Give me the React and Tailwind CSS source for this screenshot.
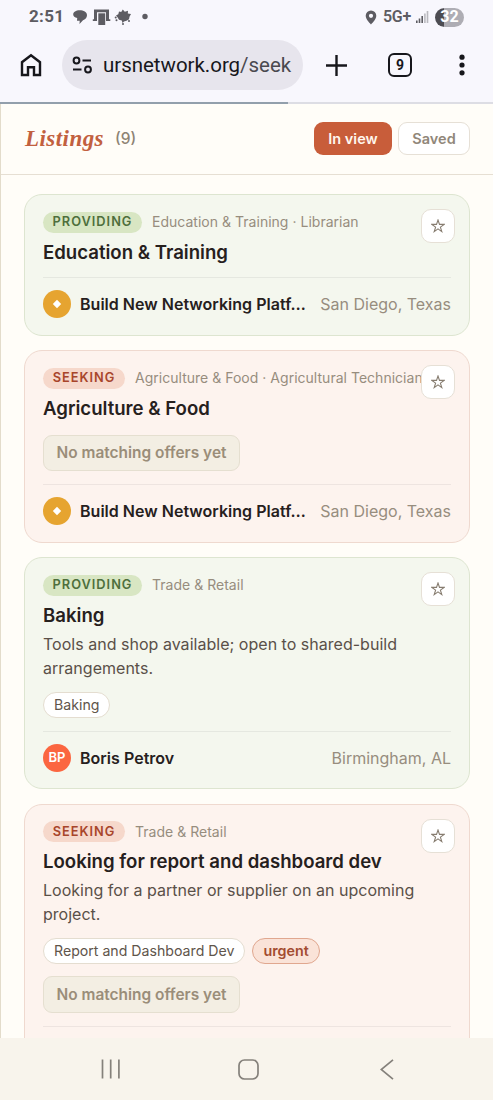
import React from 'react';

const LISTINGS = [
  {
    id: 1,
    type: 'providing',
    category: 'Education & Training · Librarian',
    title: 'Education & Training',
    owner: 'Build New Networking Platf…',
    location: 'San Diego, Texas',
  },
  {
    id: 2,
    type: 'seeking',
    category: 'Agriculture & Food · Agricultural Technician',
    title: 'Agriculture & Food',
    noOffers: true,
    owner: 'Build New Networking Platf…',
    location: 'San Diego, Texas',
  },
  {
    id: 3,
    type: 'providing',
    category: 'Trade & Retail',
    title: 'Baking',
    description: 'Tools and shop available; open to shared-build arrangements.',
    tags: ['Baking'],
    owner: 'Boris Petrov',
    initials: 'BP',
    location: 'Birmingham, AL',
  },
  {
    id: 4,
    type: 'seeking',
    category: 'Trade & Retail',
    title: 'Looking for report and dashboard dev',
    description: 'Looking for a partner or supplier on an upcoming project.',
    tags: ['Report and Dashboard Dev'],
    urgent: true,
    noOffers: true,
    owner: '',
    location: '',
  },
];

const StatusBar = () => (
  <div className="flex h-[34px] items-center justify-between pl-[29px] pr-[29px] text-[#5d5c62]">
    <div className="flex items-center">
      <span className="w-[36px] whitespace-nowrap font-['Roboto',sans-serif] text-[17px] font-bold tracking-[0.3px]">2:51</span>
      <svg className="ml-[7px]" width="80" height="20" viewBox="0 0 80 20" fill="currentColor">
        <path d="M1.200 7.500C1.200 4.800 4 3.200 7.500 3.200c4.200 0 7.500 1.700 7.500 5 0 2.800-2 4.300-4 5L7.500 17l.2-3.300H5l.2-2.600C2.800 10.600 1.200 9.500 1.200 7.500z" />
        <path d="M22 2.500h15v9.800h1.300V14H34V5.200h-9V14h-4.200v-1.700H22z" />
        <path d="M26.300 6.300h6.900V18h-6.900z" />
        <path d="M47 4.500l2.200.5 1.600-2.500 2 2.200 3.200-1-.2 2.800 3.200.500-1.500 2.800-.5 2.500-2.500 1.500-2.500.8L50.500 16l-.7-2.500-2.800-.700-1.500-2.500L44 8.500l2.300-1.200z" />
        <circle cx="43.700" cy="10.500" r="1" />
        <circle cx="44.500" cy="13.200" r="1" />
        <circle cx="57" cy="14" r="1" />
        <circle cx="51" cy="17" r="1" />
        <circle cx="73" cy="9.500" r="2.700" />
      </svg>
    </div>
    <div className="flex items-center">
      <svg width="12" height="15" viewBox="0 0 12 15" fill="currentColor" fillRule="evenodd">
        <path d="M6 .5a5.300 5.300 0 0 0-5.300 5.300C.7 9.500 6 14.500 6 14.500s5.300-5 5.300-8.700A5.300 5.300 0 0 0 6 .5zm0 3.200a2.100 2.100 0 1 1 0 4.200 2.100 2.100 0 0 1 0-4.200z" />
      </svg>
      <span className="ml-[6px] w-[29px] whitespace-nowrap font-['Roboto',sans-serif] text-[16px] font-semibold tracking-[-0.3px]">5G+</span>
      <svg className="ml-[4px]" width="13" height="14" viewBox="0 0 13 14" fill="currentColor">
        <rect x="0" y="10.500" width="1.600" height="2.500" />
        <rect x="2.700" y="8.500" width="1.600" height="4.500" />
        <rect x="5.400" y="6" width="1.600" height="7" />
        <rect x="8.100" y="3.500" width="1.600" height="9.500" opacity=".4" />
        <rect x="10.700" y="1" width="1.600" height="12" opacity=".4" />
      </svg>
      <span className="ml-[6px] flex h-[19px] w-[29px] items-center justify-center rounded-full bg-linear-to-r from-[#4d4c52] from-32% to-[#aeadb4] to-32% font-['Roboto',sans-serif] text-[16px] font-bold text-white">32</span>
    </div>
  </div>
);

const BrowserBar = () => (
  <div className="flex h-[68px] items-center pb-[6px] pl-[20px] text-[#17171c]">
    <svg width="22" height="24" viewBox="0 0 22 24" fill="none" stroke="currentColor" strokeWidth="2.400">
      <path d="M2 22V9.200L11 2.200l9 7V22h-6v-7.800H8V22z" />
    </svg>
    <div className="ml-[20px] flex h-[50px] w-[241px] items-center rounded-full bg-[#e7e5ed] pl-[10px]">
      <svg width="21" height="18" viewBox="0 0 21 18" fill="none" stroke="currentColor" strokeWidth="2">
        <circle cx="4.500" cy="4.500" r="2.900" />
        <path d="M10.500 4.500H19M1 13.500h8.500" />
        <circle cx="16" cy="13.500" r="2.900" />
      </svg>
      <span className="ml-[10px] whitespace-nowrap font-['Roboto',sans-serif] text-[20.500px] tracking-[-0.030px]">
        ursnetwork.org<span className="text-[#4a494f]">/seek</span>
      </span>
    </div>
    <svg className="ml-[23px]" width="21" height="21" viewBox="0 0 21 21" fill="none" stroke="currentColor" strokeWidth="2.400">
      <path d="M10.500 0v21M0 10.500h21" />
    </svg>
    <div className="ml-[41px] flex h-[24px] w-[24px] items-center justify-center rounded-[6px] border-2 border-[#17171c] font-['Roboto',sans-serif] text-[14px] font-bold">9</div>
    <svg className="ml-[46px]" width="8" height="22" viewBox="0 0 8 22" fill="currentColor">
      <circle cx="4" cy="3.200" r="2.600" />
      <circle cx="4" cy="11" r="2.600" />
      <circle cx="4" cy="18.800" r="2.600" />
    </svg>
  </div>
);

const ListingsHeader = () => (
  <div className="flex h-[71px] items-center justify-between border-b border-[#e6dfd3] pl-[24px] pr-[23px]">
    <div className="flex items-center">
      <h1 className="w-[80px] whitespace-nowrap font-['Liberation_Serif',serif] text-[23px] font-bold italic leading-[28px] tracking-[0.450px] text-[#c2603f]">Listings</h1>
      <span className="ml-[10px] text-[15.500px] font-medium text-[#8d8374]">(9)</span>
    </div>
    <div className="flex gap-[6px]">
      <button className="h-[33px] w-[78px] rounded-[9px] bg-[#c85d3a] text-[14.500px] font-semibold text-[#fff6ee]">In view</button>
      <button className="h-[33px] w-[72px] rounded-[9px] border border-[#e6e0d6] bg-white text-[14.500px] font-semibold text-[#91877a]">Saved</button>
    </div>
  </div>
);

const ListingCard = ({ listing }) => {
  const providing = listing.type === 'providing';
  const hasBody = listing.description || listing.noOffers;

  return (
    <div
      className={`relative shrink-0 rounded-[18px] border px-[18px] pb-[16.500px] pt-[16.500px] ${
        providing ? 'border-[#dde5d0] bg-[#f4f7ee]' : 'border-[#efd9cf] bg-[#fdf3ee]'
      }`}
    >
      <div className="flex h-[21px] items-center whitespace-nowrap">
        <span
          className={`flex h-[21px] items-center justify-center rounded-full text-[12.800px] font-semibold tracking-[1px] ${
            providing ? 'w-[99px] bg-[#d8e6c3] text-[#4e6f3c]' : 'w-[82px] bg-[#f6d8cb] text-[#a8452a]'
          }`}
        >
          {providing ? 'PROVIDING' : 'SEEKING'}
        </span>
        <span className="ml-[10px] pb-[1px] text-[14px] tracking-[0.020px] text-[#978d7e]">{listing.category}</span>
      </div>

      <h2 className="mt-[7px] whitespace-nowrap text-[18.600px] font-semibold leading-[25px] text-[#26201d]">{listing.title}</h2>

      {listing.description && (
        <p className="mt-[4px] text-[16px] leading-[24px] tracking-[0.020px] text-[#5a5048]">{listing.description}</p>
      )}

      {listing.tags && (
        <div className="mt-[12px] flex gap-[7px]">
          {listing.tags.map((tag) => (
            <span key={tag} className="flex h-[26px] items-center rounded-full border border-[#e4ddd0] bg-white px-[10px] text-[14.150px] text-[#5f554b]">
              {tag}
            </span>
          ))}
          {listing.urgent && (
            <span className="flex h-[26px] items-center rounded-full border border-[#e0a78f] bg-[#fae3d8] px-[10px] text-[14.300px] font-semibold text-[#a34c30]">urgent</span>
          )}
        </div>
      )}

      {listing.noOffers && (
        <div
          className={`flex h-[36.500px] w-[197px] items-center justify-center whitespace-nowrap rounded-[9px] border border-[#e5dfd0] bg-[#f3eee3] text-[15.450px] font-semibold text-[#9a8d79] ${
            listing.tags ? 'mt-[12px]' : 'mt-[14px]'
          }`}
        >
          No matching offers yet
        </div>
      )}

      <div className={`flex items-center border-t border-black/6 pt-[12px] ${hasBody ? 'mt-[13px]' : 'mt-[12.500px]'}`}>
        <span
          className={`flex h-[28px] w-[28px] shrink-0 items-center justify-center rounded-full text-[13px] font-semibold text-white ${
            listing.initials ? 'bg-[#fb6640]' : 'bg-[#e6a430]'
          }`}
        >
          {listing.initials || (
            <svg width="10" height="10" viewBox="0 0 10 10" fill="currentColor">
              <path d="M5 .8L9.200 5 5 9.200.8 5z" />
            </svg>
          )}
        </span>
        <span className="ml-[9px] flex-1 whitespace-nowrap text-[16px] font-semibold tracking-[0.020px] text-[#26201d]">{listing.owner}</span>
        <span className="shrink-0 text-[16px] text-[#978d7e]">{listing.location}</span>
      </div>

      <button className="absolute right-[14px] top-[14px] flex h-[34px] w-[34px] items-center justify-center rounded-[10px] border border-[#e6e0d6] bg-white text-[#877d70]">
        <svg width="14" height="14" viewBox="0 0 14 14" fill="none" stroke="currentColor" strokeWidth="1.100">
          <path d="M7 1l1.500 4.400h4.600L9.400 8.100l1.400 4.500L7 9.900l-3.800 2.700 1.400-4.500L.9 5.400h4.600z" />
        </svg>
      </button>
    </div>
  );
};

const NavBar = () => (
  <div className="flex h-[62px] shrink-0 items-center bg-[#f8f4ec] pl-[101px] text-[#85817b]">
    <svg width="20" height="20" viewBox="0 0 20 20" stroke="currentColor" strokeWidth="1.700">
      <path d="M1.500.5v19M9.700.5v19M17.900.5v19" />
    </svg>
    <svg className="ml-[117px]" width="21" height="21" viewBox="0 0 21 21" fill="none" stroke="currentColor" strokeWidth="1.700">
      <rect x="1" y="1" width="19" height="19" rx="5.500" />
    </svg>
    <svg className="ml-[121px]" width="14" height="21" viewBox="0 0 14 21" fill="none" stroke="currentColor" strokeWidth="1.700">
      <path d="M13 .8L1.200 10.500 13 20.200" />
    </svg>
  </div>
);

const App = () => {
  return (
    <div className="flex h-[1100px] w-[493px] flex-col overflow-hidden bg-[#fffdf8] font-['Inter',sans-serif]">
      <div className="h-[102px] shrink-0 bg-[#f8f7fd]">
        <StatusBar />
        <BrowserBar />
      </div>
      <div className="h-[1.500px] shrink-0 bg-[#dddde4]">
        <div className="h-full w-[288px] bg-[#929fac]"></div>
      </div>
      <div className="flex min-h-0 flex-1 flex-col overflow-hidden border-l border-[#e3dccb]">
        <ListingsHeader />
        <div className="flex min-h-0 flex-1 flex-col gap-[14.500px] overflow-hidden pl-[23px] pr-[23px] pt-[19.500px]">
          {LISTINGS.map((listing) => (
            <ListingCard key={listing.id} listing={listing} />
          ))}
        </div>
      </div>
      <NavBar />
    </div>
  );
};

export default App;
